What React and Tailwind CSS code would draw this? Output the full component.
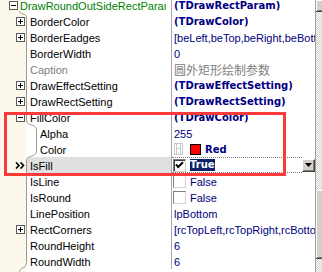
import React from "react";

const T = "leading-[14px] pt-[2px] whitespace-nowrap";
const BOLD = "font-['DejaVu_Sans',sans-serif] font-bold text-[10px]";

const rows = [
  { name: "DrawRoundOutSideRectParam", root: true, box: "minus", value: "(TDrawRectParam)", bold: true },
  { name: "BorderColor", box: "plus", value: "(TDrawColor)", bold: true },
  { name: "BorderEadges", box: "plus", value: "[beLeft,beTop,beRight,beBottom]" },
  { name: "BorderWidth", value: "0" },
  { name: "Caption", gray: true, value: "圆外矩形绘制参数", cjk: true },
  { name: "DrawEffectSetting", box: "plus", value: "(TDrawEffectSetting)", bold: true },
  { name: "DrawRectSetting", box: "plus", value: "(TDrawRectSetting)", bold: true },
  { name: "FillColor", box: "minus", value: "(TDrawColor)", bold: true },
  { name: "Alpha", level: 2, value: "255" },
  { name: "Color", level: 2, kind: "color" },
  { name: "IsFill", kind: "fill", selected: true },
  { name: "IsLine", kind: "check" },
  { name: "IsRound", kind: "check" },
  { name: "LinePosition", value: "lpBottom" },
  { name: "RectCorners", box: "plus", value: "[rcTopLeft,rcTopRight,rcBottomLeft,rcBottomRight]" },
  { name: "RoundHeight", value: "6" },
  { name: "RoundWidth", value: "6" },
];

const ExpandBox = ({ minus }) => (
  <svg width="9" height="9" viewBox="0 0 9 9" className="shrink-0">
    <rect x="0.5" y="0.5" width="8" height="8" fill="#fff" stroke="#5a5a5a" />
    <path d="M2 4.5H7" stroke="#000" />
    {!minus && <path d="M4.5 2V7" stroke="#000" />}
  </svg>
);

const Marker = () => (
  <svg width="10" height="7" viewBox="0 0 10 7" className="shrink-0">
    <path d="M1 0.5L4 3.5L1 6.5M5.5 0.5L8.5 3.5L5.5 6.5" stroke="#000" strokeWidth="1.6" fill="none" />
  </svg>
);

const CheckBox = ({ checked }) => (
  <span
    className={`flex h-[13px] w-[13px] shrink-0 items-center justify-center border border-t-[#808080] border-l-[#808080] border-r-[#d4d0c8] border-b-[#d4d0c8] bg-white ${
      checked ? "shadow-[inset_1px_1px_0_#404040]" : ""
    }`}
  >
    {checked && (
      <svg width="11" height="11" viewBox="0 0 11 11">
        <path d="M2 4.5L4.2 7L9 2.2" stroke="#000" strokeWidth="2" fill="none" />
      </svg>
    )}
  </span>
);

const ColorIcon = () => (
  <svg width="9" height="12" viewBox="0 0 9 12" className="shrink-0">
    <g stroke="#c8c8c8" fill="none">
      <rect x="0.5" y="0.5" width="2" height="11" />
      <rect x="6.5" y="0.5" width="2" height="11" />
      <path d="M3 0.5H6M3 5.5H6M3 11.5H6" />
    </g>
  </svg>
);

const Value = ({ row }) => {
  if (row.kind === "color") {
    return (
      <div className="flex h-4 items-center pl-[2px]">
        <ColorIcon />
        <span className="ml-[7px] h-[11px] w-[11px] shrink-0 border border-black bg-[#ff0000]" />
        <span className={`${T} ${BOLD} ml-[4px] text-[#000080]`}>Red</span>
      </div>
    );
  }
  if (row.kind === "fill") {
    return (
      <div className="flex h-4 w-full items-center">
        <div className="flex h-4 min-w-0 flex-1 items-center border-y border-dotted border-[#808080] pl-[1px]">
          <CheckBox checked />
          <span className={`ml-[4px] flex h-[12px] items-center bg-[#0a246a] ${BOLD} leading-[12px] text-white`}>
            True
          </span>
        </div>
        <button className="flex h-[13px] w-[13px] shrink-0 items-center justify-center border border-t-white border-l-white border-r-[#404040] border-b-[#404040] bg-[#d4d0c8] shadow-[inset_-1px_-1px_0_#808080]">
          <svg width="7" height="4" viewBox="0 0 7 4">
            <path d="M0 0H7L3.5 4Z" fill="#000" />
          </svg>
        </button>
      </div>
    );
  }
  if (row.kind === "check") {
    return (
      <div className="flex h-4 items-center pl-[1px]">
        <CheckBox />
        <span className={`${T} ml-[4px] text-[#000080]`}>False</span>
      </div>
    );
  }
  let cls = "text-[#000080]";
  if (row.bold) cls = `${BOLD} text-[#000080]`;
  if (row.cjk) cls = "font-['Noto_Sans_CJK_SC',sans-serif] text-[12px] text-[#808080]";
  return <span className={`${T} pl-[2px] ${cls}`}>{row.value}</span>;
};

const Row = ({ row }) => (
  <div className="flex h-4 items-center">
    <div className="flex h-4 w-[171px] shrink-0 items-center">
      {row.root ? (
        <>
          <div className="flex w-[20px] shrink-0 items-center pl-[9px]">
            <ExpandBox minus />
          </div>
          <span className={`${T} mr-[5px] min-w-0 flex-1 overflow-hidden text-[#008000]`}>{row.name}</span>
        </>
      ) : (
        <>
          <div className={`flex w-[26px] shrink-0 items-center ${row.selected ? "pl-[15px]" : "pl-[16px]"}`}>
            {row.box && <ExpandBox minus={row.box === "minus"} />}
            {row.selected && <Marker />}
          </div>
          <div className="w-px shrink-0" />
          <div
            className={`flex h-4 min-w-0 flex-1 items-center overflow-hidden ${row.selected ? "bg-[#e0e0e0]" : ""} ${
              row.level === 2 ? "pl-[13px]" : "pl-[3px]"
            }`}
          >
            <span className={`${T} ${row.gray ? "text-[#808080]" : "text-black"}`}>{row.name}</span>
          </div>
        </>
      )}
    </div>
    <div className="h-4 w-px shrink-0 bg-[#a8a8a8]" />
    <div className="flex h-4 min-w-0 flex-1 items-center overflow-hidden">
      <Value row={row} />
    </div>
  </div>
);

const checker = "bg-[image:repeating-conic-gradient(#d4d0c8_0_25%,#ffffff_0_50%)] bg-[length:2px_2px]";

export default function App() {
  return (
    <div className="flex h-[272px] w-[322px] overflow-hidden bg-white font-['Liberation_Sans',Arial,sans-serif] text-[11px]">
      <div className="relative h-[272px] w-[315px] shrink-0 overflow-hidden bg-[linear-gradient(to_right,#fcf8ec_0_26px,#ffffff_26px)]">
        <div className="mt-[-3px] flex flex-col">
          {rows.map((row) => (
            <Row key={row.name} row={row} />
          ))}
        </div>
        <svg width="40" height="272" className="pointer-events-none absolute left-0 top-0">
          <path
            d="M19.5 11C19.5 15 26.5 13 26.5 17V120C26.5 127 36.5 123 36.5 130V151C36.5 158 26.5 154 26.5 161V263C26.5 269 19.5 267 19.5 272"
            stroke="#9a9a9a"
            fill="none"
          />
        </svg>
        <div className="pointer-events-none absolute left-[4px] top-[112px] h-[64px] w-[282px] border-[3px] border-[#fb3b3b]" />
      </div>
      <div className="w-px shrink-0 bg-[#a0a0a0]" />
      <div className="flex w-[6px] shrink-0 flex-col">
        <div className="h-[12px] shrink-0 border-b border-[#404040] bg-[#d4d0c8] shadow-[inset_1px_1px_0_#fff,inset_0_-1px_0_#808080]" />
        <div className={`h-[178px] shrink-0 ${checker}`} />
        <div className="h-[69px] shrink-0 border-b border-[#404040] bg-[#d4d0c8] shadow-[inset_1px_1px_0_#fff,inset_0_-1px_0_#808080]" />
        <div className={`flex-1 ${checker}`} />
      </div>
    </div>
  );
}
